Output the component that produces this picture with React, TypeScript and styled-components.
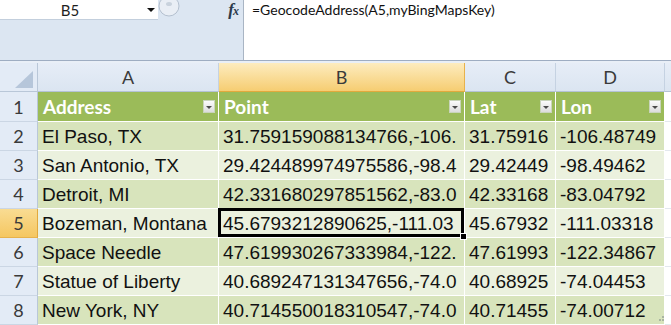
import React from 'react'
import styled, { createGlobalStyle } from 'styled-components'

const GlobalStyle = createGlobalStyle`
  html, body {
    margin: 0;
    padding: 0;
    background: #ffffff;
  }
`

const uiFont = `Lato, "Open Sans", Arial, sans-serif`
const cellFont = `"Liberation Sans", Arial, sans-serif`

const Window = styled.div`
  width: 671px;
  height: 325px;
  overflow: hidden;
  display: flex;
  flex-direction: column;
  background: #ffffff;
`

/* formula bar */

const FormulaBar = styled.div`
  height: 60px;
  display: flex;
  border-bottom: 1px solid #9eadc2;
  flex: 0 0 auto;
`

const NamePane = styled.div`
  width: 243px;
  background: #dce6f2;
  border-right: 1px solid #a9b5c4;
  display: flex;
  flex-direction: column;
`

const NameRow = styled.div`
  height: 20px;
  display: flex;
  align-items: center;
`

const NameBox = styled.div`
  width: 158px;
  height: 20px;
  background: #ffffff;
  border-bottom: 1px solid #c3cfdd;
  box-sizing: border-box;
  display: flex;
  align-items: center;
`

const NameText = styled.div`
  width: 140px;
  text-align: center;
  font-family: ${uiFont};
  font-size: 15px;
  color: #1e1e1e;
`

const DropArrow = styled.div`
  width: 0;
  height: 0;
  margin-left: 7px;
  border-left: 4px solid transparent;
  border-right: 4px solid transparent;
  border-top: 4px solid #111;
`

const Fx = styled.div`
  margin-left: auto;
  margin-right: 5px;
  font-family: "Liberation Serif", "DejaVu Serif", serif;
  font-style: italic;
  font-weight: bold;
  font-size: 17px;
  color: #2b3a4c;
  letter-spacing: -1px;

  span {
    font-size: 12px;
  }
`

const FormulaText = styled.div`
  flex: 1;
  padding: 1px 0 0 8px;
  font-family: ${uiFont};
  font-size: 14px;
  color: #111;
`

const Gap = styled.div`
  height: 2px;
  background: #e9eff7;
  flex: 0 0 auto;
`

/* grid */

const Sheet = styled.div`
  display: grid;
  grid-template-columns: 38px 181px 246px 91px 109px 6px;
  grid-template-rows: 29px 30px repeat(7, 29px);
`

const Corner = styled.div`
  background: #e3ebf6;
  border-right: 1px solid #b9c7d8;
  border-bottom: 1px solid #b9c7d8;
  display: flex;
  align-items: flex-end;
  justify-content: flex-end;
  padding: 0 4px 3px 0;
`

const ColHeader = styled.div<{ $active?: boolean }>`
  background: ${({ $active }) =>
    $active
      ? 'linear-gradient(#fdecbf, #f6cd72)'
      : 'linear-gradient(#e6edf7, #dbe5f1)'};
  border-right: 1px solid ${({ $active }) => ($active ? '#e7b24c' : '#c5d2e2')};
  border-bottom: 1px solid ${({ $active }) => ($active ? '#e2a93d' : '#b4c3d6')};
  display: flex;
  align-items: center;
  justify-content: center;
  font-family: ${uiFont};
  font-size: 18px;
  color: #3a3a3a;
`

const RowHeader = styled.div<{ $active?: boolean }>`
  background: ${({ $active }) =>
    $active ? 'linear-gradient(#f9dc93, #f5c761)' : '#e3ebf6'};
  border-right: 1px solid ${({ $active }) => ($active ? '#e2a93d' : '#b9c7d8')};
  border-bottom: 1px solid ${({ $active }) => ($active ? '#e7b24c' : '#cbd6e4')};
  display: flex;
  align-items: center;
  justify-content: center;
  font-family: ${uiFont};
  font-size: 18px;
  color: #3a3a3a;
`

const HeadCell = styled.div`
  background: #9bbb59;
  border-right: 1px solid #ffffff;
  border-bottom: 1px solid #ffffff;
  display: flex;
  align-items: center;
  padding: 0 3px 0 5px;
  font-family: ${uiFont};
  font-weight: 700;
  font-size: 19px;
  color: #ffffff;
`

const FilterButton = styled.div`
  margin-left: auto;
  width: 12px;
  height: 13px;
  background: linear-gradient(#fbfbfb, #dcdcdc);
  border: 1px solid #c9d4bb;
  box-sizing: border-box;
  display: flex;
  align-items: center;
  justify-content: center;

  &::after {
    content: '';
    border-left: 3px solid transparent;
    border-right: 3px solid transparent;
    border-top: 3px solid #4a4a4a;
    margin-top: 2px;
  }
`

const Cell = styled.div<{ $band: 'dark' | 'light'; $selected?: boolean }>`
  position: relative;
  background: ${({ $band }) => ($band === 'dark' ? '#d8e4bc' : '#ebf1de')};
  border-right: 1px solid #ffffff;
  border-bottom: 1px solid #ffffff;
  display: flex;
  align-items: center;
  padding: 2px 0 0 4px;
  box-sizing: border-box;
  white-space: nowrap;
  overflow: hidden;
  font-family: ${cellFont};
  font-size: 19px;
  color: #111;
`

/* selection frame drawn over the active cell */
const Selection = styled.div`
  position: absolute;
  left: -1px;
  top: -1px;
  right: 0;
  bottom: 0;
  border: 3px solid #000;
  pointer-events: none;
`

const ActiveCell = styled(Cell)`
  overflow: visible;
  z-index: 1;
`

const FillHandle = styled.div`
  position: absolute;
  right: -3px;
  bottom: -3px;
  width: 5px;
  height: 5px;
  background: #000;
  border: 1px solid #fff;
`

const Edge = styled.div<{ $head?: boolean }>`
  position: relative;
  background: ${({ $head }) => ($head ? 'linear-gradient(#e6edf7, #dbe5f1)' : '#ffffff')};
  border-bottom: 1px solid ${({ $head }) => ($head ? '#b4c3d6' : '#e3e8ee')};
`

const ResizeGrip = styled.svg`
  position: absolute;
  left: -6px;
  bottom: 3px;
`

const columns = ['A', 'B', 'C', 'D']
const headings = ['Address', 'Point', 'Lat', 'Lon']

const rows = [
  ['El Paso, TX', '31.759159088134766,-106.', '31.75916', '-106.48749'],
  ['San Antonio, TX', '29.424489974975586,-98.4', '29.42449', '-98.49462'],
  ['Detroit, MI', '42.331680297851562,-83.0', '42.33168', '-83.04792'],
  ['Bozeman, Montana', '45.6793212890625,-111.03', '45.67932', '-111.03318'],
  ['Space Needle', '47.619930267333984,-122.', '47.61993', '-122.34867'],
  ['Statue of Liberty', '40.689247131347656,-74.0', '40.68925', '-74.04453'],
  ['New York, NY', '40.714550018310547,-74.0', '40.71455', '-74.00712'],
]

const activeRow = 5
const activeCol = 1

const Splitter = () => (
  <svg width="22" height="20" viewBox="0 0 22 20">
    <circle cx="11" cy="6" r="10" fill="#e9eef5" stroke="#b4c0cf" />
    <ellipse cx="11" cy="4" rx="3" ry="2" fill="#c9d2dd" />
  </svg>
)

export default function App() {
  return (
    <Window>
      <GlobalStyle />
      <FormulaBar>
        <NamePane>
          <NameRow>
            <NameBox>
              <NameText>B5</NameText>
              <DropArrow />
            </NameBox>
            <Splitter />
            <Fx>
              f<span>x</span>
            </Fx>
          </NameRow>
        </NamePane>
        <FormulaText>=GeocodeAddress(A5,myBingMapsKey)</FormulaText>
      </FormulaBar>
      <Gap />
      <Sheet>
        <Corner>
          <svg width="18" height="17" viewBox="0 0 18 17">
            <polygon points="18,0 18,17 0,17" fill="#b6c6da" />
          </svg>
        </Corner>
        {columns.map((c, i) => (
          <ColHeader key={c} $active={i === activeCol}>
            {c}
          </ColHeader>
        ))}
        <Edge $head />

        <RowHeader>1</RowHeader>
        {headings.map((h) => (
          <HeadCell key={h}>
            {h}
            <FilterButton />
          </HeadCell>
        ))}
        <Edge />

        {rows.map((r, ri) => {
          const n = ri + 2
          const band = n % 2 === 0 ? 'dark' : 'light'
          return (
            <React.Fragment key={n}>
              <RowHeader $active={n === activeRow}>{n}</RowHeader>
              {r.map((v, ci) =>
                n === activeRow && ci === activeCol ? (
                  <ActiveCell key={ci} $band={band}>
                    {v}
                    <Selection />
                    <FillHandle />
                  </ActiveCell>
                ) : (
                  <Cell key={ci} $band={band}>
                    {v}
                  </Cell>
                )
              )}
              <Edge>
                {n === 8 && (
                  <ResizeGrip width="5" height="5" viewBox="0 0 5 5">
                    <rect x="3" y="0" width="2" height="2" fill="#a8b4a0" />
                    <rect x="0" y="3" width="2" height="2" fill="#a8b4a0" />
                    <rect x="3" y="3" width="2" height="2" fill="#a8b4a0" />
                  </ResizeGrip>
                )}
              </Edge>
            </React.Fragment>
          )
        })}
      </Sheet>
    </Window>
  )
}
